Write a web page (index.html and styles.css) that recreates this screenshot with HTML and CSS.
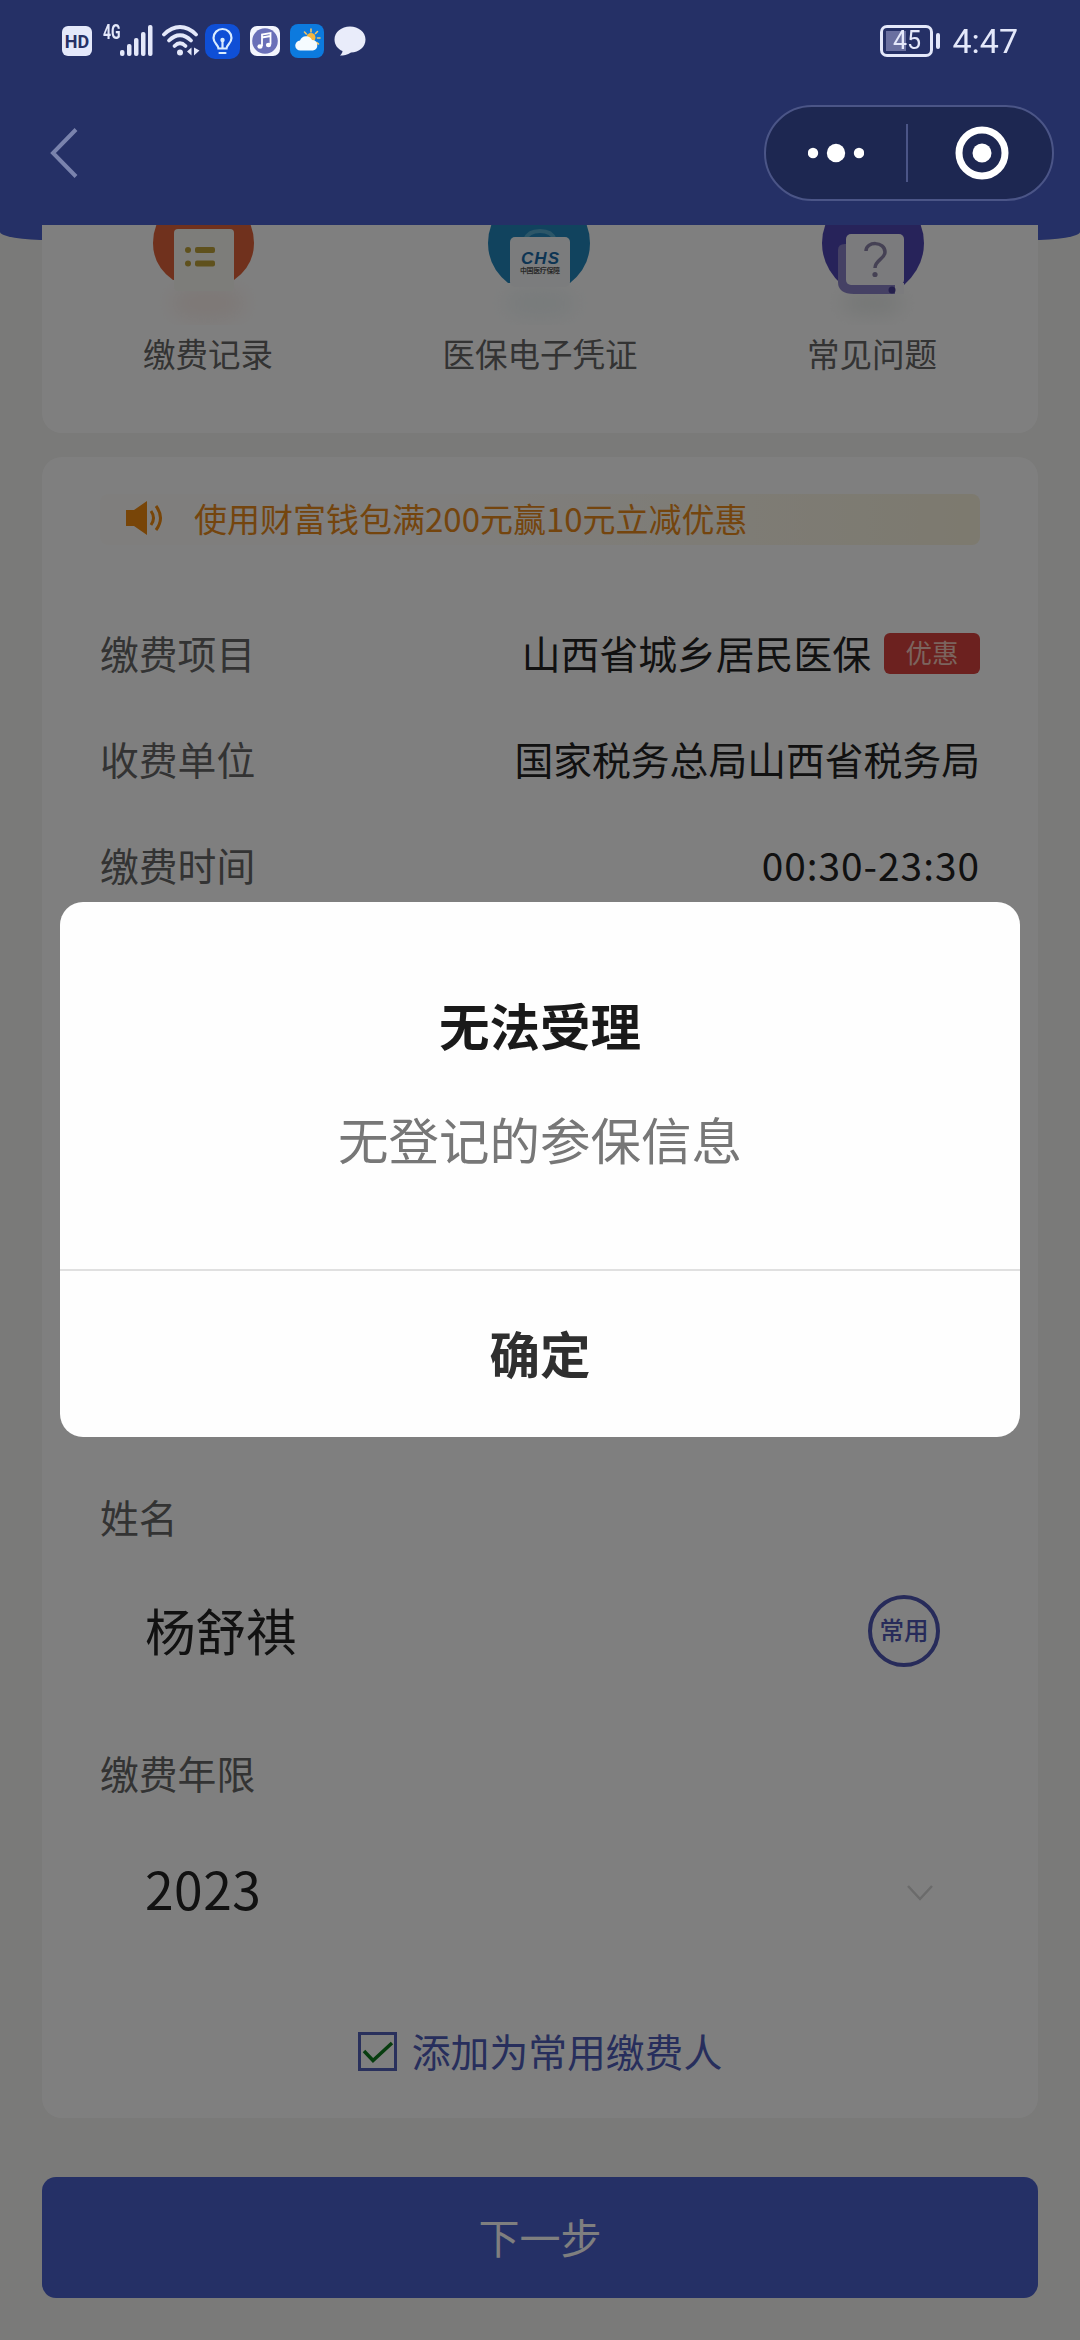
FILE: index.html
```html
<!DOCTYPE html>
<html lang="zh-CN">
<head>
    <meta charset="UTF-8">
    <meta name="viewport" content="width=device-width, initial-scale=1.0">
    <title>医保缴费</title>
    <link rel="stylesheet" href="styles.css">
</head>
<body>
    <div class="page">
        <header class="header">
            <!-- Phone status bar -->
            <div class="status-bar">
                <span class="hd">HD</span>
                <span class="network">4G</span>
                <svg class="signal" width="33" height="32" viewBox="0 0 33 32" fill="#e4e8fa">
                    <rect x="0" y="25" width="4.5" height="6" rx="2" />
                    <rect x="7" y="19" width="4.5" height="12" rx="2" />
                    <rect x="14" y="13" width="4.5" height="18" rx="2" />
                    <rect x="21" y="7" width="4.5" height="24" rx="2" />
                    <rect x="28" y="0" width="4.5" height="31" rx="2" />
                </svg>
                <svg class="wifi" width="38" height="32" viewBox="0 0 38 32" fill="none" stroke="#e4e8fa" stroke-width="3.8" stroke-linecap="round">
                    <path d="M2 9.5C12-.5 24-.5 34 9.5" />
                    <path d="M7 15.5c7-7 15-7 22 0" />
                    <path d="M12.5 21c3.5-3.5 7.5-3.5 11 0" />
                    <circle cx="18" cy="27.5" r="3" fill="#e4e8fa" stroke="none" />
                    <path d="M29.500 22.500v8l-4.500-4zM32 22.500v8l5.500-5z" fill="#e4e8fa" stroke="none" />
                </svg>
                <svg class="app" width="35" height="35" viewBox="0 0 35 35">
                    <rect width="35" height="35" rx="10" fill="#0f4fd6" />
                    <g fill="none" stroke="#d9ecff" stroke-width="2.2" stroke-linecap="round">
                        <path d="M13.5 24.5c0-4-5-5-5-10.500a9 9 0 0 1 18 0c0 5.500-5 6.500-5 10.500z" />
                        <path d="M14.5 29h6M17.5 24v-8" />
                    </g>
                    <circle cx="17.5" cy="16" r="2.2" fill="#d9ecff" />
                </svg>
                <svg class="app" width="30" height="30" viewBox="0 0 30 30">
                    <rect width="30" height="30" rx="7" fill="#f3f5fd" />
                    <circle cx="15" cy="15" r="12.8" fill="#6a70b8" />
                    <path d="M12 20V8.5l8.500-1.500v11.500M12 11.500l8.500-1.500" fill="none" stroke="#fff" stroke-width="1.8" />
                    <ellipse cx="10" cy="20.5" rx="2.6" ry="2.2" fill="#fff" />
                    <ellipse cx="18.5" cy="19" rx="2.6" ry="2.2" fill="#fff" />
                </svg>
                <svg class="app" width="34" height="34" viewBox="0 0 34 34">
                    <rect width="34" height="34" rx="8" fill="#0c7ade" />
                    <path d="M21 5v3M14.5 8l1.800 2M27.500 7.500l-2 2M30 14h-2.500M28.500 20l-2-1.500" stroke="#f2c467" stroke-width="1.6" stroke-linecap="round" />
                    <circle cx="21" cy="13.5" r="4.5" fill="#f4b63f" />
                    <path d="M10.500 26.500a5 5 0 0 1-.5-10 6.500 6.500 0 0 1 12-.5 5.300 5.300 0 0 1 1 10.500z" fill="#f5fbff" />
                </svg>
                <svg class="app" width="32" height="30" viewBox="0 0 32 30">
                    <path d="M16 .5C24.500.5 31.500 6 31.500 13.500S25 26.500 17 26.500c-3.500 2.500-7.500 3-11 3 1.500-1.500 2.500-3 2.500-4.500C3.500 23 .5 18.500.5 13.500.5 6 7.500.5 16 .5z" fill="#e9ecfa" />
                </svg>
                <span class="battery">45</span>
                <span class="clock">4:47</span>
            </div>

            <div class="nav-bar">
                <svg class="back" width="30" height="52" viewBox="0 0 30 52" fill="none" stroke="#7a83ad" stroke-width="4">
                    <path d="M27 2.500L4 26L27 49.500" />
                </svg>
                <div class="capsule">
                    <svg width="56" height="20" viewBox="0 0 56 20" fill="#fff">
                        <circle cx="5" cy="10" r="5.2" />
                        <circle cx="28" cy="10" r="9.2" />
                        <circle cx="51" cy="10" r="5.2" />
                    </svg>
                    <span class="capsule-line"></span>
                    <svg width="54" height="54" viewBox="0 0 54 54">
                        <circle cx="27" cy="27" r="23" fill="none" stroke="#fff" stroke-width="7" />
                        <circle cx="27" cy="27" r="9.5" fill="#fff" />
                    </svg>
                </div>
            </div>
        </header>

        <main class="content">
            <!-- Shortcuts, scrolled partly under the header -->
            <section class="card shortcuts">
                <div class="shortcut">
                    <svg width="120" height="100" viewBox="0 0 120 100">
                        <ellipse class="glow" cx="60" cy="78" rx="38" ry="18" fill="#fcf1ed" />
                        <path d="M5 18a50.500 50.500 0 0 1 101 0q0 23-20 37H25Q5 41 5 18z" fill="#e0633a" />
                        <rect x="26" y="4" width="60" height="62" rx="4" fill="#fafaf5" />
                        <g fill="#bfa33a">
                            <circle cx="40" cy="25" r="3" />
                            <rect x="47" y="22" width="20" height="6" rx="2" />
                            <circle cx="40" cy="38.5" r="3" />
                            <rect x="47" y="35.5" width="20" height="6" rx="2" />
                        </g>
                    </svg>
                    <span>缴费记录</span>
                </div>
                <div class="shortcut">
                    <svg width="120" height="100" viewBox="0 0 120 100">
                        <ellipse class="glow" cx="60" cy="78" rx="38" ry="16" fill="#f1f7f8" />
                        <path d="M8 18a51 51 0 0 1 102 0q0 24-20 40H28Q8 42 8 18z" fill="#2287bd" />
                        <path d="M45 15q3-9 15-9t15 9" fill="none" stroke="#58acd0" stroke-width="4" />
                        <rect x="30" y="12" width="60" height="50" rx="5" fill="#f6f9fb" />
                        <text x="60" y="38.5" class="chs" textLength="38">CHS</text>
                        <text x="60" y="47.5" class="chs-sub" textLength="40">中国医疗保障</text>
                    </svg>
                    <span>医保电子凭证</span>
                </div>
                <div class="shortcut">
                    <svg width="120" height="100" viewBox="0 0 120 100">
                        <ellipse class="glow" cx="60" cy="78" rx="32" ry="12" fill="#eaeeec" />
                        <path d="M10 18a51 51 0 0 1 102 0q0 24-20 42H30Q10 42 10 18z" fill="#4f46b4" />
                        <path d="M26 25q0-6 7-6h50v50H42q-16 0-16-12z" fill="#8a83c8" />
                        <rect x="34" y="9" width="58" height="51" rx="5" fill="#f6f6fa" />
                        <path d="M84 58h8v11h-9z" fill="#f6f6fa" />
                        <circle cx="80" cy="65" r="3.5" fill="#4b409a" />
                        <path d="M54 26c0-10 19-10 19 1 0 7-10 8-10 16" fill="none" stroke="#8a82a8" stroke-width="3.5" />
                        <circle cx="63" cy="49.5" r="2.6" fill="#8a82a8" />
                    </svg>
                    <span>常见问题</span>
                </div>
            </section>

            <section class="card form">
                <div class="notice">
                    <svg width="42" height="36" viewBox="0 0 42 36">
                        <path d="M2 10h8L23 1v34L10 26H2z" fill="#f08a10" />
                        <path d="M27 11q5 7 0 14M32 6q9 12 0 24" fill="none" stroke="#f08a10" stroke-width="3" />
                    </svg>
                    <span>使用财富钱包满200元赢10元立减优惠</span>
                </div>

                <div class="row">
                    <span class="label">缴费项目</span>
                    <span class="value">山西省城乡居民医保<em class="tag">优惠</em></span>
                </div>
                <div class="row">
                    <span class="label">收费单位</span>
                    <span class="value">国家税务总局山西省税务局</span>
                </div>
                <div class="row">
                    <span class="label">缴费时间</span>
                    <span class="value time">00:30-23:30</span>
                </div>

                <div class="field name-field">
                    <span class="label">姓名</span>
                    <div class="input">
                        <span>杨舒祺</span>
                        <span class="common">常用</span>
                    </div>
                </div>
                <div class="field">
                    <span class="label">缴费年限</span>
                    <div class="input">
                        <span class="year">2023</span>
                        <svg class="arrow" width="28" height="18" viewBox="0 0 28 18" fill="none" stroke="#d6d6d6" stroke-width="2.5">
                            <path d="M2 2l12 13L26 2" />
                        </svg>
                    </div>
                </div>

                <div class="add-common">
                    <svg width="39" height="39" viewBox="0 0 39 39" fill="none">
                        <rect x="1.5" y="1.5" width="36" height="36" stroke="#5360b8" stroke-width="3" />
                        <path d="M6 19l9 9.500L34 11" stroke="#0f7a1e" stroke-width="3.5" />
                    </svg>
                    <span>添加为常用缴费人</span>
                </div>
            </section>

            <button class="next-btn">下一步</button>
        </main>
    </div>

    <!-- Alert dialog -->
    <div class="mask">
        <div class="dialog">
            <div class="dialog-body">
                <h2>无法受理</h2>
                <p>无登记的参保信息</p>
            </div>
            <button class="dialog-btn">确定</button>
        </div>
    </div>
</body>
</html>
```

FILE: styles.css
```css
* {
    box-sizing: border-box;
}

body {
    margin: 0;
    font-family: "Noto Sans CJK SC", sans-serif;
    background-color: #f4f4f2;
    color: #333;
}

svg {
    display: block;
    flex-shrink: 0;
}

.page {
    position: relative;
    width: 1080px;
    height: 2340px;
    overflow: hidden;
}

    /* blue backdrop, runs a little below the header */
    .page::before {
        content: "";
        position: absolute;
        top: 0;
        left: 0;
        right: 0;
        height: 240px;
        background-color: #4b61cc;
        border-radius: 0 0 50px 50px / 0 0 8px 8px;
    }

/* Header */
.header {
    position: relative;
    z-index: 20;
    height: 225px;
}

.status-bar {
    display: flex;
    align-items: center;
    height: 82px;
    padding: 0 62px;
    color: #e4e8fa;
    font-family: Roboto, sans-serif;
}

.hd {
    width: 30px;
    height: 30px;
    border-radius: 6px;
    background-color: #e4e8fa;
    color: #263065;
    font-size: 18px;
    font-weight: 700;
    line-height: 31px;
    text-align: center;
}

.network {
    width: 17px;
    margin: 0 0 19px 11px;
    font-size: 20px;
    font-weight: 700;
    line-height: 18px;
    transform: scaleX(0.7);
    transform-origin: left;
}

.signal {
    margin-right: 9px;
}

.wifi {
    margin-right: 5px;
}

.app {
    margin-right: 10px;
}

.battery {
    position: relative;
    width: 53px;
    height: 32px;
    margin-left: auto;
    margin-right: 19px;
    border: 3px solid #e4e8fa;
    border-radius: 7px;
    background: linear-gradient(90deg, #6a70a0 20px, transparent 20px) 3px 3px / 41px 20px no-repeat;
    font-size: 25px;
    line-height: 26px;
    text-align: center;
}

    .battery::after {
        content: "";
        position: absolute;
        top: 5px;
        right: -10px;
        width: 4px;
        height: 16px;
        border-radius: 2px;
        background-color: #e4e8fa;
    }

.clock {
    font-size: 34px;
    line-height: 40px;
}

.nav-bar {
    display: flex;
    justify-content: space-between;
    align-items: center;
    height: 143px;
    padding: 0 26px 1px 49px;
}

.capsule {
    display: flex;
    align-items: center;
    width: 290px;
    height: 96px;
    padding-left: 42px;
    border: 2px solid #4b5587;
    border-radius: 48px;
    background-color: #1d2751;
}

.capsule-line {
    width: 2px;
    height: 58px;
    margin: 0 47px 0 42px;
    background-color: #4b5587;
}

/* Content */
.content {
    position: relative;
    padding: 0 42px;
}

.card {
    background-color: #fff;
    border-radius: 20px;
}

.shortcuts {
    display: flex;
    height: 208px;
    border-radius: 0 0 20px 20px;
}

.shortcut {
    flex: 1;
    display: flex;
    flex-direction: column;
    align-items: center;
    gap: 5px;
    color: #666;
    font-size: 32.5px;
    line-height: 46px;
}

.glow {
    filter: blur(10px);
}

.chs {
    fill: #1a6aa8;
    font-family: "Liberation Sans", sans-serif;
    font-size: 17px;
    font-weight: 700;
    font-style: italic;
    text-anchor: middle;
}

.chs-sub {
    fill: #555;
    font-size: 7px;
    font-weight: 700;
    text-anchor: middle;
}

.form {
    height: 1661px;
    margin-top: 24px;
    padding: 37px 58px 0;
    font-size: 38.8px;
}

.notice {
    display: flex;
    align-items: center;
    gap: 28px;
    height: 51px;
    margin-bottom: 57px;
    padding: 0 0 3px 24px;
    border-radius: 8px;
    background: linear-gradient(90deg, #fffdfa 40%, #faf4de);
    color: #e88a1c;
    font-size: 33px;
}

.row {
    display: flex;
    justify-content: space-between;
    align-items: center;
    height: 106px;
    padding-bottom: 6px;
}

.label {
    color: #666;
}

.value {
    display: flex;
    align-items: center;
    color: #222;
}

.time {
    letter-spacing: 1px;
}

.tag {
    width: 96px;
    height: 41px;
    margin: 3px 0 0 13px;
    border-radius: 6px;
    background-color: #d8423e;
    color: #f7c9bd;
    font-size: 26.5px;
    font-style: normal;
    line-height: 38px;
    text-align: center;
}

.field {
    height: 256px;
    line-height: 56px;
}

.name-field {
    margin-top: 568px;
}

.input {
    display: flex;
    justify-content: space-between;
    align-items: center;
    height: 72px;
    margin-top: 49px;
    padding: 0 40px 0 45px;
    color: #222;
    font-size: 50.5px;
}

.year {
    margin-top: 5px;
    font-size: 51.5px;
    letter-spacing: 0.5px;
}

.common {
    width: 72px;
    height: 72px;
    margin-top: 4px;
    border: 4px solid #4e56b4;
    border-radius: 50%;
    color: #4e56b4;
    font-size: 24.5px;
    font-weight: 500;
    line-height: 62px;
    text-align: center;
}

.arrow {
    margin: 16px 6px 0 0;
}

.add-common {
    display: flex;
    justify-content: center;
    align-items: center;
    gap: 15px;
    height: 56px;
    margin-top: 23px;
    color: #4e5cb8;
    line-height: 56px;
}

    .add-common span {
        padding-bottom: 2px;
    }

.next-btn {
    display: block;
    width: 100%;
    height: 121px;
    margin-top: 59px;
    padding: 0 0 4px;
    border: none;
    border-radius: 14px;
    background-color: #4b61cc;
    color: #fff;
    font-family: inherit;
    font-size: 41px;
}

/* Dialog */
.mask {
    position: fixed;
    top: 0;
    left: 0;
    z-index: 10;
    display: flex;
    justify-content: center;
    align-items: center;
    width: 1080px;
    height: 2340px;
    padding-bottom: 1px;
    background-color: rgba(0, 0, 0, 0.5);
}

.dialog {
    width: 960px;
    height: 535px;
    border-radius: 23px;
    overflow: hidden;
    background-color: #fefefe;
}

.dialog-body {
    height: 369px;
    padding-top: 85px;
    border-bottom: 2px solid #e0e0e0;
    text-align: center;
}

    .dialog-body h2 {
        margin: 0;
        color: #1a1a1a;
        font-size: 50.5px;
        font-weight: 700;
        line-height: 74px;
    }

    .dialog-body p {
        margin: 40px 0 0;
        color: #777;
        font-size: 50.5px;
        line-height: 74px;
    }

.dialog-btn {
    width: 100%;
    height: 166px;
    padding: 0 0 5px;
    border: none;
    background: none;
    color: #2f2f2f;
    font-family: inherit;
    font-size: 50.5px;
    font-weight: 700;
}
```
